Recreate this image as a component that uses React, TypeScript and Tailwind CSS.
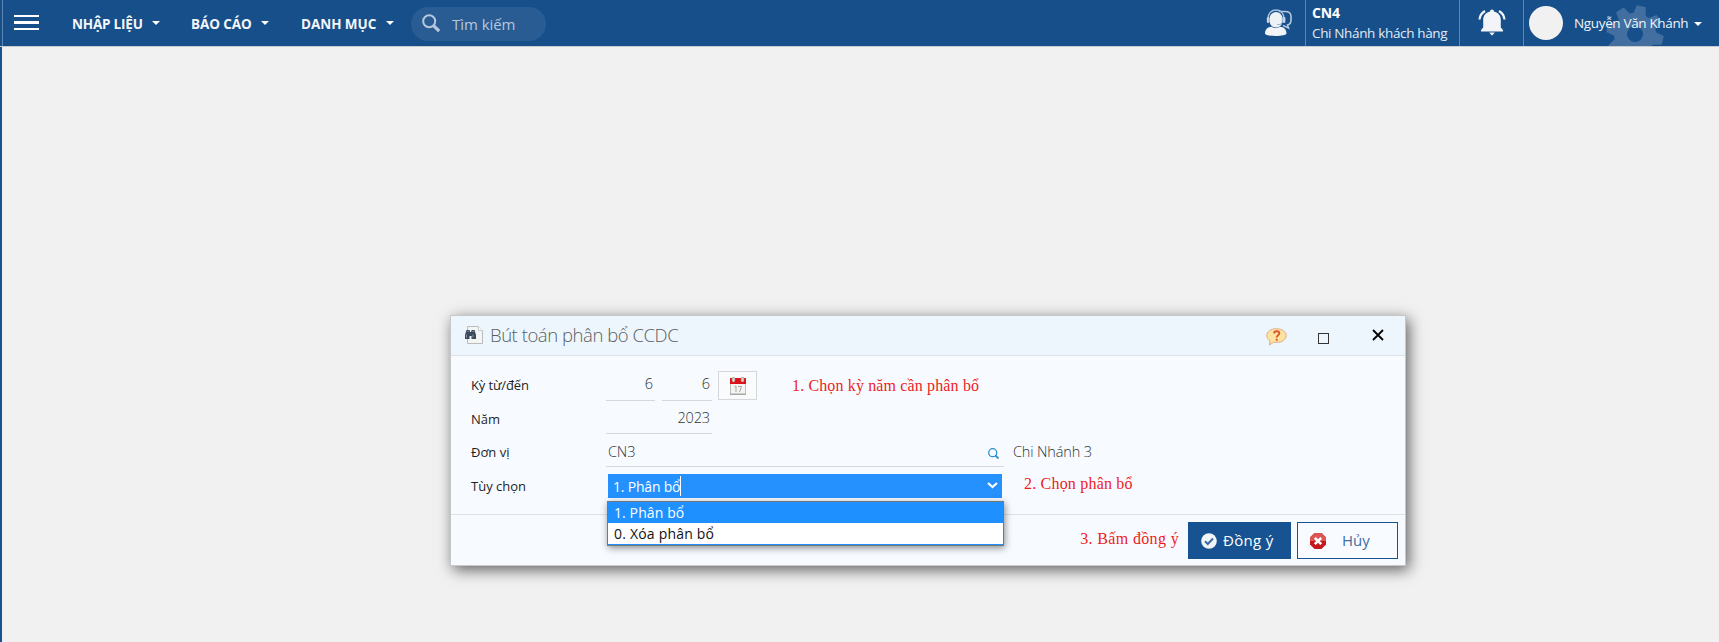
import type { ReactNode } from "react";

function Caret() {
  return (
    <svg width="8" height="4" viewBox="0 0 8 4" className="shrink-0">
      <path d="M0 0h8L4 4z" fill="#fff" />
    </svg>
  );
}

function MenuItem({ label, className }: { label: string; className: string }) {
  return (
    <button className={`flex items-center justify-between text-[13.5px] font-bold whitespace-nowrap text-[#f3f6fa] ${className}`}>
      <span className="pt-[3px]">{label}</span>
      <Caret />
    </button>
  );
}

function SupportIcon() {
  return (
    <svg width="28" height="28" viewBox="0 0 28 28" className="shrink-0">
      <path d="M14 2.500h6c4 0 6 1.500 6 5v3.500c0 3-1 4.500-3.500 5l1 3-5.500-2.500" fill="none" stroke="#b3c7de" strokeWidth="1.600" />
      <path d="M4.500 9.500a6.500 6.500 0 0 1 13 0v2c0 4.500-3 7-6.500 7s-6.500-2.500-6.500-7z" fill="#eef2f7" />
      <path d="M3.200 9.500C3 4 6.500 1 11 1s8 3 7.800 8.500" fill="none" stroke="#a9c0da" strokeWidth="1.400" />
      <path d="M17.300 8v5q0 2.500-5 2.700" fill="none" stroke="#8faccb" strokeWidth="1" />
      <rect x="1.800" y="8" width="2.600" height="6" rx="1.300" fill="#c5d4e5" />
      <rect x="17.800" y="8" width="2.600" height="6" rx="1.300" fill="#c5d4e5" />
      <path d="M0 24.500c0-4.500 3-6.500 6.500-6.800 2.500 1.800 6 1.800 8.500 0 3.500.3 6.500 2.300 6.500 6.800 0 1.500-5 2.500-10.700 2.500S0 26 0 24.500z" fill="#f2f4f7" />
    </svg>
  );
}

function BellIcon() {
  return (
    <svg width="28" height="28" viewBox="0 0 28 28" className="shrink-0" fill="#f2f4f7">
      <path d="M14 0.500c1.200 0 1.900.8 1.900 2 4.600 1 6.900 4.300 6.900 8.500v7.500l2.200 2.500v1.500H3V21l2.200-2.500V11c0-4.200 2.300-7.500 6.900-8.500 0-1.200.7-2 1.900-2z" />
      <path d="M11.200 23.500h5.600L14 26.800z" />
      <path d="M7 2Q2 4.800 1.500 10.500M21 2q5 2.800 5.500 8.500" fill="none" stroke="#f2f4f7" strokeWidth="2.200" />
    </svg>
  );
}

function Gear() {
  return (
    <svg width="60" height="60" viewBox="-30 -30 60 60" className="absolute left-[81px] top-[4px]">
      <g transform="rotate(13)" fill="#426fa0">
        {[0, 45, 90, 135, 180, 225, 270, 315].map((a) => (
          <path key={a} d="M-7-17L-4.500-28.500H4.500L7-17z" transform={`rotate(${a})`} />
        ))}
        <path fillRule="evenodd" d="M0-21a21 21 0 1 0 0 42a21 21 0 1 0 0-42zM0-8a8 8 0 1 1 0 16a8 8 0 1 1 0-16z" />
      </g>
    </svg>
  );
}

function Header() {
  return (
    <header className="flex h-[47px] overflow-hidden border-b border-[#c9cbce] bg-[#164f8a]">
      <div className="ml-[2px] flex w-[408px] border-l border-[#5c85b0]">
        <button className="ml-[11px] mt-[15px] flex h-[15px] w-[25px] flex-col justify-between">
          <i className="h-[2px] w-full bg-white" />
          <i className="h-[3px] w-full bg-white" />
          <i className="h-[2px] w-full bg-white" />
        </button>
        <nav className="ml-[33px] flex h-[46px] items-center pb-px">
          <MenuItem label="NHẬP LIỆU" className="w-[88px] tracking-[-0.2px]" />
          <MenuItem label="BÁO CÁO" className="ml-[31px] w-[78px] tracking-[-0.1px]" />
          <MenuItem label="DANH MỤC" className="ml-[32px] w-[93px] tracking-[-0.05px]" />
        </nav>
      </div>
      <div className="ml-[1px] mt-[7px] flex h-[34px] w-[135px] items-center rounded-full bg-[#295c93] pl-[11px]">
        <svg width="19" height="19" viewBox="0 0 19 19" fill="none" stroke="#b6c8dc" className="-mt-[2px]">
          <circle cx="7.200" cy="7.200" r="6" strokeWidth="2" />
          <path d="M11.800 11.800l5.400 5.400" strokeWidth="3.200" />
        </svg>
        <span className="ml-[11px] text-[15px] tracking-[-0.05px] text-[#b6c8dc]">Tìm kiếm</span>
      </div>
      <div className="ml-auto flex">
        <div className="flex w-[41px] pt-[9px] pl-px">
          <SupportIcon />
        </div>
        <div className="flex w-[154px] flex-col border-l border-[#5c85b0] pl-[6px] pt-[3px] whitespace-nowrap">
          <span className="h-[20px] text-[14px] leading-[20px] font-bold tracking-[-0.2px] text-white">CN4</span>
          <span className="h-[20px] text-[13.5px] leading-[21px] tracking-[-0.35px] text-[#e4ebf3]">Chi Nhánh khách hàng</span>
        </div>
        <div className="flex w-[64px] border-l border-[#5c85b0] pl-[18px] pt-[9px]">
          <BellIcon />
        </div>
        <div className="relative flex w-[196px] items-center border-l border-[#5c85b0] pl-[5px]">
          <Gear />
          <div className="relative -mt-px size-[34px] shrink-0 rounded-full bg-[#f1f1f1]" />
          <span className="relative ml-[11px] w-[120px] pt-px text-[13.5px] tracking-[-0.35px] whitespace-nowrap text-[#f0f4f8]">Nguyễn Văn Khánh</span>
          <span className="relative flex pt-px">
            <Caret />
          </span>
        </div>
      </div>
    </header>
  );
}

function DocIcon() {
  return (
    <svg width="18" height="18" viewBox="0 0 18 18" className="shrink-0">
      <path d="M2.500.5h11l4 4v13h-15z" fill="#f4f5f5" stroke="#b9bcbe" />
      <path d="M13.500.5v4h4" fill="#fff" stroke="#c9cccd" />
      <path d="M0 13V9l1.500-5h3l.7 2h.8l.7-2h2.800L11 9v4H6.500v-3h-2v3z" fill="#3c4a5c" />
      <path d="M1.500 8.500v3M8 8.500v3M2.500 5.500h1.500M7.500 5.500h1.500" stroke="#8594a5" />
    </svg>
  );
}

function HelpIcon() {
  return (
    <svg width="21" height="18" viewBox="0 0 21 18">
      <path d="M10.500.7c5.600 0 9.700 2.900 9.700 6.900s-4.100 6.900-9.700 6.900c-1 0-2-.1-2.900-.3L3.500 17l.5-4.200C2 11.600.8 9.800.8 7.600c0-4 4.100-6.900 9.700-6.900z" fill="#fde3a0" stroke="#e3a989" />
      <path d="M8 5.300c.3-3 5.500-2.700 5.300.2-.1 1.800-2.600 1.800-2.600 3.900M10.700 10.800v2" fill="none" stroke="#d9542f" strokeWidth="1.900" />
    </svg>
  );
}

function CalendarIcon() {
  return (
    <svg width="16" height="18" viewBox="0 0 16 18">
      <rect x="0.500" y="5" width="15" height="12.500" fill="#f4f4f3" stroke="#c1bfbb" />
      <path d="M0 16.500h16V18H0z" fill="#aaa7a2" />
      <path d="M0 1h16v6H0z" fill="#dd1219" />
      <rect x="2" y="0" width="3" height="5" rx="1.500" fill="#d3cfcc" stroke="#a8807e" strokeWidth=".5" />
      <rect x="11" y="0" width="3" height="5" rx="1.500" fill="#d3cfcc" stroke="#a8807e" strokeWidth=".5" />
      <path d="M4.500 10l1.500-1v6M8 9.500h3.500L9.500 15" fill="none" stroke="#a6a6a6" />
    </svg>
  );
}

function Row({ label, className, labelClass, children }: { label: string; className: string; labelClass: string; children: ReactNode }) {
  return (
    <div className={`flex pl-[20px] ${className}`}>
      <span className={`w-[135px] shrink-0 text-[13px] leading-[20px] whitespace-nowrap text-[#1e1e1e] ${labelClass}`}>{label}</span>
      {children}
    </div>
  );
}

const note = "font-['Liberation_Serif',serif] text-[16px] leading-[20px] whitespace-nowrap text-[#ee1c24]";
const value = "text-[14.5px] leading-[20px] font-[350] tracking-[-0.15px] text-[#333]";

function Dialog() {
  return (
    <section className="ml-[448px] mt-[268px] flex h-[251px] w-[956px] flex-col border border-[#c5c7c9] bg-[#f7fbff] shadow-[3px_4px_14px_rgba(0,0,0,0.6)]">
      <div className="flex h-[40px] shrink-0 items-start border-b border-[#dfe0e1] bg-[#edf6fd]">
        <div className="ml-[14px] mt-[10px]">
          <DocIcon />
        </div>
        <h1 className="ml-[7px] mt-[6px] text-[18.5px] leading-[26px] font-[350] tracking-[-0.45px] whitespace-nowrap text-[#5a5e61]">Bút toán phân bổ CCDC</h1>
        <div className="mr-[21px] ml-auto flex">
          <button className="mt-[12px] h-[18px] w-[52px]">
            <HelpIcon />
          </button>
          <button className="mt-[17px] h-[11px] w-[54px]">
            <svg width="11" height="11" viewBox="0 0 11 11">
              <rect x=".5" y=".5" width="10" height="10" fill="none" stroke="#333" />
            </svg>
          </button>
          <button className="mt-[13px] h-[12px] w-[12px]">
            <svg width="12" height="12" viewBox="0 0 12 12">
              <path d="M1 1l10 10M11 1L1 11" stroke="#000" strokeWidth="1.800" />
            </svg>
          </button>
        </div>
      </div>

      <Row label="Kỳ từ/đến" className="h-[45px]" labelClass="mt-[19px] tracking-[-0.15px]">
        <div className={`${value} flex h-[45px] w-[49px] justify-end border-b border-[#d8d8da] pt-[18px] pr-[2px]`}>6</div>
        <div className={`${value} ml-[7px] flex h-[45px] w-[50px] justify-end border-b border-[#d8d8da] pt-[18px] pr-[2px]`}>6</div>
        <button className="mt-[15px] ml-[6px] flex h-[29px] w-[39px] items-center justify-center border border-[#d5d7d9] bg-[#f9fbfd]">
          <CalendarIcon />
        </button>
        <span className={`${note} mt-[20px] ml-[35px] tracking-[0.14px]`}>1. Chọn kỳ năm cần phân bổ</span>
      </Row>
      <Row label="Năm" className="h-[33px]" labelClass="mt-[8px]">
        <div className={`${value} flex h-[33px] w-[106px] justify-end border-b border-[#d8d8da] pt-[7px] pr-[2px]`}>2023</div>
      </Row>
      <Row label="Đơn vị" className="h-[33px]" labelClass="mt-[8px]">
        <div className={`${value} flex h-[33px] w-[398px] justify-between border-b border-[#d8d8da] pt-[8px] pr-[5px] pl-[2px]`}>
          <span>CN3</span>
          <svg width="11" height="11" viewBox="0 0 11 11" className="mt-[6px] shrink-0" fill="none" stroke="#2c8fce">
            <circle cx="4.700" cy="4.700" r="4" strokeWidth="1.300" />
            <path d="M7.500 7.500l3 3" strokeWidth="1.800" />
          </svg>
        </div>
        <span className={`${value} mt-[8px] ml-[9px] whitespace-nowrap`}>Chi Nhánh 3</span>
      </Row>
      <Row label="Tùy chọn" className="h-[47px]" labelClass="mt-[9px]">
        <div className="relative h-[46px] w-[396px] pl-[2px] pt-[7px]">
          <div className="flex h-[24px] items-center bg-[#2491ff] pr-[4px] pl-[5px] text-[14px] tracking-[-0.2px] whitespace-nowrap text-white">
            <span className="h-[20px] w-[68px] border-r border-white leading-[21px]">1. Phân bổ</span>
            <svg width="11" height="7" viewBox="0 0 11 7" className="-mt-px ml-auto">
              <path d="M1 1l4.500 4L10 1" fill="none" stroke="#fff" strokeWidth="2.200" />
            </svg>
          </div>
          <ul className="absolute top-[34px] left-px z-10 h-[45px] w-[397px] border border-[#777] bg-white text-[14px] leading-[21px] whitespace-nowrap shadow-[1px_2px_7px_rgba(0,0,0,0.45)]">
            <li className="h-[21px] bg-[#1e90ff] pl-[6px] tracking-[0.1px] text-white">1. Phân bổ</li>
            <li className="h-[22px] border-b border-[#1e90ff] pl-[6px] tracking-[0.2px] text-[#111]">0. Xóa phân bổ</li>
          </ul>
        </div>
        <span className={`${note} mt-[7px] ml-[22px] tracking-[0.2px]`}>2. Chọn phân bổ</span>
      </Row>

      <footer className="flex h-[51px] shrink-0 justify-end border-t border-[#dfe0e1] pt-[7px] pr-[7px]">
        <span className={`${note} mt-[7px] mr-[9px] tracking-[0.35px]`}>3. Bấm đồng ý</span>
        <button className="flex h-[37px] w-[103px] items-center bg-[#175392] pl-[13px] text-[15px] tracking-[0.3px] whitespace-nowrap text-white">
          <svg width="16" height="16" viewBox="0 0 16 16" className="shrink-0">
            <circle cx="8" cy="8" r="7.800" fill="#f3f6f9" />
            <path d="M4 8.200l2.800 2.800L12 5.500" fill="none" stroke="#386da3" strokeWidth="2" />
          </svg>
          <span className="ml-[6px]">Đồng ý</span>
        </button>
        <button className="ml-[6px] flex h-[37px] w-[101px] items-center border border-[#175392] bg-[#f8fbff] pl-[12px] text-[15px] text-[#3f6f9f]">
          <svg width="16" height="16" viewBox="0 0 16 16" className="shrink-0">
            <path d="M4.500 0h7L16 4.500v7L11.500 16h-7L0 11.500v-7z" fill="#c4191f" />
            <path d="M4.500 0h7L16 4.500V8H0V4.500z" fill="#db5555" />
            <path d="M4.800 4.800l6.400 6.400M11.200 4.800l-6.400 6.400" stroke="#fff" strokeWidth="2.600" />
          </svg>
          <span className="ml-[16px]">Hủy</span>
        </button>
      </footer>
    </section>
  );
}

export default function App() {
  return (
    <div className="flex h-[642px] w-[1719px] flex-col overflow-hidden bg-[#f1f1f1] font-['Open_Sans','Noto_Sans',sans-serif]">
      <Header />
      <main className="flex flex-1 items-start border-l-2 border-[#175392]">
        <Dialog />
      </main>
    </div>
  );
}
